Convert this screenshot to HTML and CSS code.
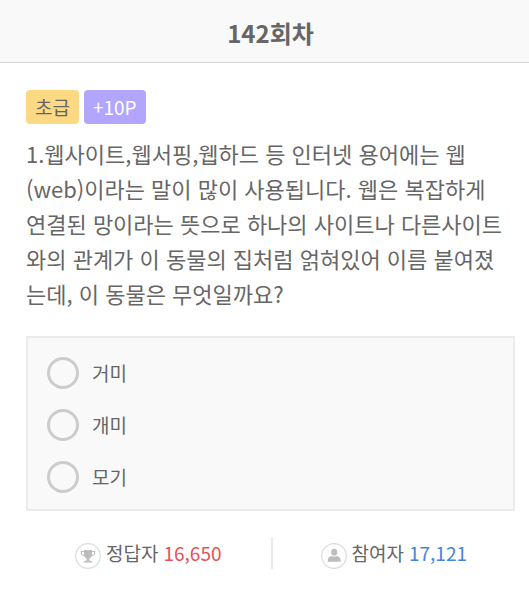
FILE: index.html
```html
<!DOCTYPE html>
<html lang="ko">
<head>
<meta charset="utf-8">
<meta name="viewport" content="width=device-width, initial-scale=1">
<title>142회차</title>
<link rel="stylesheet" href="styles.css">
</head>
<body>
<header class="top">
  <h1 class="title">142회차</h1>
</header>
<main class="quiz">
  <div class="badges">
    <span class="badge level">초급</span>
    <span class="badge point">+10P</span>
  </div>
  <p class="question" id="question">1.웹사이트,웹서핑,웹하드 등 인터넷 용어에는 웹(web)이라는 말이 많이 사용됩니다. 웹은 복잡하게 연결된 망이라는 뜻으로 하나의 사이트나 다른사이트와의 관계가 이 동물의 집처럼 얽혀있어 이름 붙여졌는데, 이 동물은 무엇일까요?</p>
  <div class="options" role="radiogroup" aria-labelledby="question">
    <label class="option"><input class="radio" type="radio" name="answer"><span>거미</span></label>
    <label class="option"><input class="radio" type="radio" name="answer"><span>개미</span></label>
    <label class="option"><input class="radio" type="radio" name="answer"><span>모기</span></label>
  </div>
</main>
<footer class="stats">
  <div class="stat">
    <svg class="icon" viewBox="0 0 26 26" aria-hidden="true">
      <circle cx="13" cy="13" r="12.3" fill="#fff" stroke="#dedede" stroke-width="1.3"/>
      <path fill-rule="evenodd" d="M9 7h8v1h3.200v1.600c0 2.200-1.300 3.400-3.600 3.700-.5 1.200-1.300 1.900-2.300 2.200v2.100c1.800.2 2.700.8 3.100 1.900H8.600c.4-1.100 1.300-1.700 3.100-1.900v-2.100c-1-.3-1.800-1-2.300-2.200C7.100 13 5.800 11.800 5.800 9.600V8H9zM6.900 9v.7c0 1.200.6 2 2.200 2.400L9 9zM17 9l-.1 3.100c1.600-.4 2.200-1.200 2.200-2.400V9z" fill="#bdbdbd"/>
    </svg>
    <span>정답자</span>
    <strong class="count correct">16,650</strong>
  </div>
  <div class="stat">
    <svg class="icon" viewBox="0 0 26 26" aria-hidden="true">
      <circle cx="13" cy="13" r="12.3" fill="#fff" stroke="#dedede" stroke-width="1.3"/>
      <ellipse cx="13.200" cy="9.200" rx="3" ry="3.400" fill="#bdbdbd"/>
      <path d="M6.800 18.800v-1.600c0-2.500 1.600-3.900 4-4.300q2.400 1.400 4.800 0c2.400.4 4 1.800 4 4.300v1.600z" fill="#bdbdbd"/>
    </svg>
    <span>참여자</span>
    <strong class="count joined">17,121</strong>
  </div>
</footer>
</body>
</html>
```

FILE: styles.css
```css
* {
  box-sizing: border-box;
}

body {
  margin: 0;
  background: #fff;
  color: #666;
  font-family: "Noto Sans CJK KR", sans-serif;
  font-size: 19px;
  line-height: 32px;
}

.top {
  padding: 18px 14px 14px 26px;
  background: #f9f9f9;
  border-bottom: 1px solid #d8d8d8;
  text-align: center;
}

.title {
  margin: 0;
  font-size: 24px;
  font-weight: 700;
  line-height: 30px;
}

.quiz {
  padding: 27px 14px 0 26px;
}

.badges {
  display: flex;
  gap: 5px;
}

.badge {
  padding: 0 9px;
  border-radius: 4px;
  line-height: 34px;
}

.level {
  background: #fdd984;
}

.point {
  background: #b2a5fe;
  color: #fff;
}

.question {
  margin: 12px 0 25px;
  padding-right: 10px;
  font-size: 22px;
  line-height: 35px;
}

.options {
  display: flex;
  flex-direction: column;
  gap: 20px;
  padding: 19px 19px 16px;
  background: #f9f9f9;
  border: 2px solid #ebebeb;
}

.option {
  display: flex;
  align-items: center;
  gap: 13px;
}

.radio {
  appearance: none;
  width: 32px;
  height: 32px;
  margin: 0;
  border: 3px solid #ccc;
  border-radius: 50%;
}

.radio:checked {
  background: #b2a5fe;
}

.stats {
  display: grid;
  grid-template-columns: 1fr 1fr;
  padding: 26px 14px 32px 26px;
}

.stat {
  display: flex;
  align-items: center;
  justify-content: center;
  gap: 5px;
}

.stat + .stat {
  border-left: 2px solid #ebebeb;
}

.icon {
  align-self: flex-end;
  width: 26px;
  height: 26px;
}

.count {
  font-weight: 400;
}

.correct {
  color: #e8505b;
}

.joined {
  color: #4285e0;
}
```
